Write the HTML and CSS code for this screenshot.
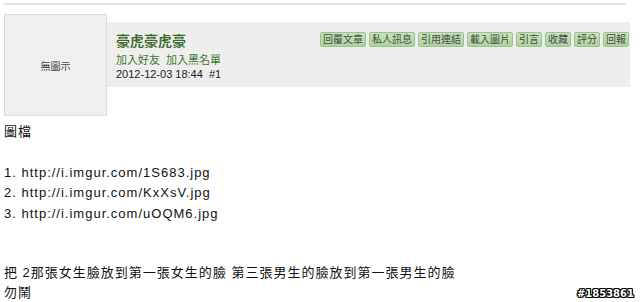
FILE: index.html
```html
<!DOCTYPE html>
<html lang="zh-Hant">
<head>
<meta charset="utf-8">
<link rel="stylesheet" href="styles.css">
</head>
<body>
<div class="topline"></div>
<div class="post">
  <div class="avatar">無圖示</div>
  <div class="head">
    <div class="info">
      <div class="name">豪虎豪虎豪</div>
      <div class="links">加入好友&nbsp; 加入黑名單</div>
      <div class="date">2012-12-03 18:44 &nbsp;#1</div>
    </div>
    <div class="btns">
      <span class="btn">回覆文章</span>
      <span class="btn">私人訊息</span>
      <span class="btn">引用連結</span>
      <span class="btn">載入圖片</span>
      <span class="btn">引言</span>
      <span class="btn">收藏</span>
      <span class="btn">評分</span>
      <span class="btn">回報</span>
    </div>
  </div>
</div>
<div class="content">
  <div>圖檔</div>
  <div class="blank"></div>
  <div class="url">1. http://i.imgur.com/1S683.jpg</div>
  <div class="url">2. http://i.imgur.com/KxXsV.jpg</div>
  <div class="url">3. http://i.imgur.com/uOQM6.jpg</div>
  <div class="blank"></div>
  <div class="blank"></div>
  <div>把 2那張女生臉放到第一張女生的臉 第三張男生的臉放到第一張男生的臉</div>
  <div>勿鬧</div>
</div>
<div class="wm">#1853861</div>
</body>
</html>
```
FILE: styles.css
```css
html, body {
  margin: 0;
  padding: 0;
  background: #ffffff;
  width: 640px;
  height: 302px;
  overflow: hidden;
  position: relative;
  font-family: "Liberation Sans", "Noto Sans CJK TC", sans-serif;
  color: #222;
}
.topline {
  height: 2px;
  background: #e2e2e2;
  margin: 3px 14px 0 4px;
}
.post {
  display: flex;
  margin: 9px 10px 0 4px;
}
.avatar {
  width: 101px;
  height: 100px;
  border: 1px solid #dcdcdc;
  background: #efefef;
  display: flex;
  align-items: center;
  justify-content: center;
  font-size: 10px;
  color: #444;
  flex: none;
}
.head {
  flex: 1;
  margin-top: 8px;
  height: 65px;
  background: #eeeeee;
  display: flex;
  justify-content: space-between;
  align-items: flex-start;
  padding: 10px 1px 0 9px;
  box-sizing: border-box;
}
.info {
  padding-top: 1px;
}
.name {
  font-size: 14px;
  font-weight: bold;
  color: #3b6b2b;
  line-height: 16px;
  margin-bottom: 4px;
}
.links {
  font-size: 11px;
  color: #3b7a2b;
  line-height: 14px;
}
.date {
  font-size: 11px;
  color: #222;
  line-height: 14px;
}
.btns {
  display: flex;
  gap: 3px;
}
.btn {
  font-size: 10px;
  line-height: 13px;
  padding: 0 2px;
  border: 1px solid #9ec28f;
  border-radius: 2px;
  background: linear-gradient(#c6e3b8, #aed39d);
  color: #4a4a4a;
}
.content {
  margin: 6px 0 0 4px;
  font-size: 13px;
  line-height: 19.75px;
  letter-spacing: 1px;
  color: #111;
}
.url {
  letter-spacing: 1px;
  margin-top: 1px;
}
.blank {
  height: 19.75px;
}
.wm {
  position: absolute;
  right: 6px;
  bottom: 3px;
  font-family: "DejaVu Sans", sans-serif;
  font-weight: bold;
  font-size: 10px;
  color: #fff;
  text-shadow: 1px 0 0 #000, -1px 0 0 #000, 0 1px 0 #000, 0 -1px 0 #000, 1px 1px 0 #000, -1px -1px 0 #000, 1px -1px 0 #000, -1px 1px 0 #000;
}
```
